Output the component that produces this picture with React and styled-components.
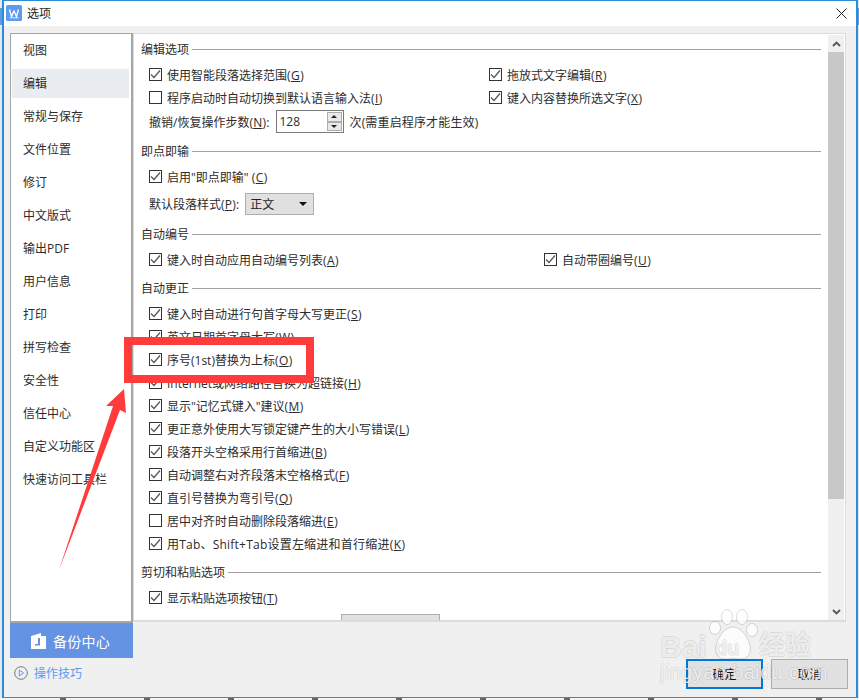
import React from "react";
import styled, { createGlobalStyle } from "styled-components";

const Global = createGlobalStyle`
  html, body { margin: 0; padding: 0; }
  body {
    width: 859px; height: 700px; overflow: hidden; background: #ffffff;
    font-family: "Open Sans", "Noto Sans CJK SC", sans-serif; font-size: 12px; color: #2c2c2c;
  }
`;

const Page = styled.div`
  position: relative; width: 859px; height: 700px; overflow: hidden;
  background: linear-gradient(#e4eaf0 0 8px, #5f9ddf 8px 25px, #e6e9ec 25px 100%);
`;
const BottomStrip = styled.div`
  position: absolute; left: 0; right: 0; bottom: 0; height: 2px;
  background: repeating-linear-gradient(90deg, #f4f4f4 0 60px, #666 60px 66px, #f4f4f4 66px 84px);
`;
const Win = styled.div`
  position: relative; box-sizing: border-box; margin-left: 2px; width: 856px; height: 698px;
  background: #f0f0f0; border: 2px solid #2b8cdc; border-top-width: 1px; border-bottom-width: 1px;
  display: flex; flex-direction: column;
`;
const TitleBar = styled.header`
  box-sizing: border-box; height: 25px; flex: none; background: #fff; display: flex; align-items: center;
  padding: 0 9px 1px 2px; gap: 5px;
`;
const TitleText = styled.span`font-size: 12px; color: #222; flex: 1; padding-bottom: 1px;`;
const Main = styled.div`display: flex; padding: 7px 8px 0 6px; flex: 1; min-height: 0;`;
const LeftCol = styled.div`width: 123px; flex: none; display: flex; flex-direction: column;`;
const RightCol = styled.div`width: 715px; flex: none; display: flex; flex-direction: column;`;
const Side = styled.nav`
  box-sizing: border-box; height: 590px; background: #fff; padding: 2px 0 0 1px;
  border: 1px solid #a6a6a6; border-right-width: 2px; border-bottom-width: 2px;
  display: flex; flex-direction: column; gap: 4px;
`;
const SideItem = styled.div`
  box-sizing: border-box; height: 29px; flex: none; margin-right: 2px; padding: 0 0 1px 11px;
  display: flex; align-items: center; font-size: 12px;
  background: ${p => (p.$active ? "#e9ecf0" : "transparent")};
`;
const Backup = styled.div`
  height: 35px; background: #6393e2; color: #fff; font-size: 14px; letter-spacing: .3px;
  display: flex; align-items: center; justify-content: center; gap: 6px; padding-right: 2px;
`;
const Tip = styled.div`
  display: flex; align-items: center; gap: 6px; margin: 6px 0 0 4px; color: #5b9bf0; font-size: 12px;
`;
const Panel = styled.div`
  box-sizing: border-box; height: 589px; margin-right: 2px; background: #fff; border: 1px solid #dcdcdc;
  border-bottom-width: 2px; display: flex; overflow: hidden;
`;
const Scroller = styled.div`
  flex: 1; min-width: 0; padding: 7px 7px 0 7px; overflow: hidden;
`;
const SecTitle = styled.div`
  height: 16px; margin: ${p => p.$gap || 0}px 0 6px; display: flex; align-items: center; gap: 3px; font-size: 12px;
  &::after { content: ""; flex: 1; height: 1px; background: #a0a0a0; }
`;
const Row = styled.div`
  height: 23px; padding-left: 8px; display: ${p => (p.$second ? "grid" : "flex")}; align-items: center;
  grid-template-columns: ${p => p.$second}px 1fr; gap: 0; white-space: nowrap; font-size: 12px;
`;
const Opt = styled.label`display: inline-flex; align-items: center; gap: 5px;`;
const OptText = styled.span`letter-spacing: ${p => p.$ls || 0}px;`;
const Key = styled.span`letter-spacing: ${p => p.$ls ?? 0.45}px;`;
const Box = styled.span`
  box-sizing: border-box; width: 13px; height: 13px; flex: none; border: 1px solid #333; background: #fff;
  display: inline-flex; align-items: center; justify-content: center;
`;
const Ctrl = styled.div`
  height: 23px; margin-top: ${p => p.$top || 0}px; padding-left: 8px; display: flex; align-items: center;
  gap: ${p => p.$gap}px; white-space: nowrap; font-size: 12px;
`;
const Spin = styled.div`
  box-sizing: border-box; width: 68px; height: 23px; border: 1px solid #7a7a7a; background: #fff;
  display: flex; align-items: center; justify-content: space-between; padding: 1px 1px 1px 3px;
`;
const SpinBtns = styled.div`display: flex; flex-direction: column; width: 15px; height: 19px;`;
const SpinBtn = styled.div`
  flex: 1; box-sizing: border-box; background: #e9e9e9; border: 1px solid #adadad;
  display: flex; align-items: center; justify-content: center;
`;
const Tri = styled.span`
  width: 0; height: 0; border-left: 3px solid transparent; border-right: 3px solid transparent;
  ${p => (p.$up ? "border-bottom: 3px solid #222;" : "border-top: 3px solid #222;")}
`;
const Select = styled.div`
  box-sizing: border-box; width: 69px; height: 22px; background: #e1e1e1; border: 1px solid #adadad;
  display: flex; align-items: center; justify-content: space-between; padding: 0 6px 0 4px; color: #222;
`;
const SelectTri = styled.span`
  width: 0; height: 0; border-left: 4px solid transparent; border-right: 4px solid transparent; border-top: 4px solid #111;
`;
const ClippedBtn = styled.div`
  width: 99px; height: 20px; margin: 5px 0 0 200px; background: #e1e1e1; border: 1px solid #adadad; box-sizing: border-box;
`;
const Bar = styled.div`
  width: 16px; flex: none; margin: 1px 1px 0 0; background: #f0f0f0; display: flex; flex-direction: column;
`;
const BarBtn = styled.div`height: 17px; display: flex; align-items: center; justify-content: center; flex: none;`;
const Thumb = styled.div`height: 447px; background: #c8c8c8; flex: none;`;
const BarRest = styled.div`flex: 1;`;
const Footer = styled.div`display: flex; justify-content: flex-end; gap: 8px; margin-top: 37px;`;
const Btn = styled.button`
  box-sizing: border-box; width: 77px; height: 30px; padding: 0; background: #e1e1e1; color: #111; font: inherit; font-size: 12px;
  border: ${p => (p.$primary ? "2px solid #0078d7" : "1px solid #adadad")};
`;
const Rect = styled.div`
  position: absolute; left: 120px; top: 336px; width: 190px; height: 46px; box-sizing: border-box;
  border: 8px solid #ff3b3b; pointer-events: none;
`;
const Overlay = styled.svg`position: absolute; left: -4px; top: -1px; pointer-events: none;`;
const Mark = styled.div`
  position: absolute; color: rgba(255,255,255,.8); font-family: "Liberation Sans", "Noto Sans CJK SC", sans-serif;
  text-shadow: 1px 0 0 rgba(0,0,0,.09), -1px 0 0 rgba(0,0,0,.09), 0 1px 0 rgba(0,0,0,.09), 0 -1px 0 rgba(0,0,0,.09);
  pointer-events: none; white-space: nowrap;
  left: ${p => p.$x}px; top: ${p => p.$y}px; font-size: ${p => p.$size}px; font-weight: ${p => p.$weight || 400};
  letter-spacing: ${p => p.$ls || 0}px; line-height: 1;
`;

const Check = () => (
  <svg width="11" height="11" viewBox="0 0 11 11" fill="none">
    <path d="M1 5.5 L4 8.5 L10 1.5" stroke="#555" strokeWidth="1.2" />
  </svg>
);
const Option = ({ on = true, text, k, ls }) => (
  <Opt>
    <Box>{on && <Check />}</Box>
    <OptText $ls={ls}>{text}{k && <Key>(<u>{k}</u>)</Key>}</OptText>
  </Opt>
);
const Chevron = ({ down }) => (
  <svg width="9" height="6" viewBox="0 0 9 6" fill="none">
    <path d={down ? "M1 1 L4.5 4.5 L8 1" : "M1 5 L4.5 1.5 L8 5"} stroke="#555" strokeWidth="1.8" />
  </svg>
);

const navItems = ["视图","编辑","常规与保存","文件位置","修订","中文版式","输出PDF","用户信息","打印","拼写检查","安全性","信任中心","自定义功能区","快速访问工具栏"];
const autoRows = [
  ["键入时自动进行句首字母大写更正","S"],["英文日期首字母大写","W"],["序号(1st)替换为上标","O"],
  ["Internet或网络路径替换为超链接","H"],["显示\"记忆式键入\"建议","M"],["更正意外使用大写锁定键产生的大小写错误","L"],
  ["段落开头空格采用行首缩进","B"],["自动调整右对齐段落末空格格式","F"],["直引号替换为弯引号","Q"],
  ["居中对齐时自动删除段落缩进","E",false],["用Tab、Shift+Tab设置左缩进和首行缩进","K",true,.22],
];

export default function App() {
  return (
    <Page>
      <Global />
      <Win>
        <TitleBar>
          <svg width="16" height="16" viewBox="0 0 16 16">
            <rect width="16" height="16" rx="1.5" fill="#5c9bf3" />
            <path d="M3.5 4.5 L5.5 11.5 L8 6 L10.5 11.5 L12.5 4.5" fill="none" stroke="#fff" strokeWidth="1.3" />
            <path d="M3.5 12.8 H12.5" stroke="#fff" strokeWidth=".8" />
          </svg>
          <TitleText>选项</TitleText>
          <svg width="11" height="11" viewBox="0 0 11 11">
            <path d="M0.5 0.5 L10.5 10.5 M10.5 0.5 L0.5 10.5" stroke="#222" strokeWidth="1" />
          </svg>
        </TitleBar>
        <Main>
          <LeftCol>
            <Side>
              {navItems.map((n, i) => <SideItem key={n} $active={i === 1}>{n}</SideItem>)}
            </Side>
            <Backup>
              <svg width="16" height="16" viewBox="0 0 16 16">
                <path d="M0 3 L10 0 V3 H15 V16 H0 Z M7 5 V11 H4 V12.5 H9 V5 Z" fill="#fff" fillRule="evenodd" />
              </svg>
              备份中心
            </Backup>
            <Tip>
              <svg width="14" height="14" viewBox="0 0 14 14" fill="none">
                <circle cx="7" cy="7" r="6.3" stroke="#777" strokeWidth="1" />
                <path d="M5.3 4 L9.6 7 L5.3 10 Z" stroke="#5b9bf0" strokeWidth="1" />
              </svg>
              操作技巧
            </Tip>
          </LeftCol>
          <RightCol>
            <Panel>
              <Scroller>
                <SecTitle>编辑选项</SecTitle>
                <Row $second={340}><Option text="使用智能段落选择范围" k="G" /><Option text="拖放式文字编辑" k="R" /></Row>
                <Row $second={340}><Option on={false} text="程序启动时自动切换到默认语言输入法" k="I" /><Option text="键入内容替换所选文字" k="X" /></Row>
                <Ctrl $gap={6} $top={1}>
                  <span>撤销/恢复操作步数<Key $ls={.2}>(<u>N</u>):</Key></span>
                  <Spin>
                    <span>128</span>
                    <SpinBtns>
                      <SpinBtn><Tri $up /></SpinBtn>
                      <SpinBtn><Tri /></SpinBtn>
                    </SpinBtns>
                  </Spin>
                  <OptText $ls={.15}>次(需重启程序才能生效)</OptText>
                </Ctrl>
                <SecTitle $gap={10}>即点即输</SecTitle>
                <Row><Option text={'启用"即点即输" '} k="C" /></Row>
                <Ctrl $gap={6} $top={4}>
                  <span>默认段落样式<Key $ls={.2}>(<u>P</u>):</Key></span>
                  <Select>正文<SelectTri /></Select>
                </Ctrl>
                <SecTitle $gap={11}>自动编号</SecTitle>
                <Row $second={395}><Option text="键入时自动应用自动编号列表" k="A" /><Option text="自动带圈编号" k="U" /></Row>
                <SecTitle $gap={9}>自动更正</SecTitle>
                {autoRows.map(([t, k, on, ls]) => <Row key={k}><Option text={t} k={k} on={on !== false} ls={ls} /></Row>)}
                <SecTitle $gap={9}>剪切和粘贴选项</SecTitle>
                <Row><Option text="显示粘贴选项按钮" k="T" /></Row>
                <ClippedBtn />
              </Scroller>
              <Bar>
                <BarBtn><Chevron /></BarBtn>
                <Thumb />
                <BarRest />
                <BarBtn><Chevron down /></BarBtn>
              </Bar>
            </Panel>
            <Footer>
              <Btn $primary>确定</Btn>
              <Btn>取消</Btn>
            </Footer>
          </RightCol>
        </Main>

        <Rect />
        <Overlay width="859" height="700" viewBox="0 0 859 700">
          <polygon points="59,570 113,406 106,406 124,389 126,413 120,410" fill="#ff3b3b" />
          <g fill="rgba(255,255,255,.8)" stroke="rgba(0,0,0,.14)" strokeWidth="1">
            <ellipse cx="727" cy="617" rx="5.5" ry="7.5" />
            <ellipse cx="742" cy="617" rx="5.5" ry="7.5" />
            <ellipse cx="715" cy="628" rx="5.5" ry="6.5" />
            <ellipse cx="752" cy="630" rx="5.5" ry="6.5" />
            <path d="M733 627 C743 627 752 643 750 652 C748 661 738 659 733 658 C728 659 718 661 716 652 C714 643 723 627 733 627 Z" />
          </g>
        </Overlay>
        <Mark $x={656} $y={631} $size={30} $weight={700}>Bai</Mark>
        <Mark $x={711} $y={637} $size={20} $weight={700}>du</Mark>
        <Mark $x={755} $y={631} $size={26} $weight={700}>经验</Mark>
        <Mark $x={656} $y={661} $size={20} $ls={.4}>jingyan.baidu.com</Mark>
      </Win>
      <BottomStrip />
    </Page>
  );
}
